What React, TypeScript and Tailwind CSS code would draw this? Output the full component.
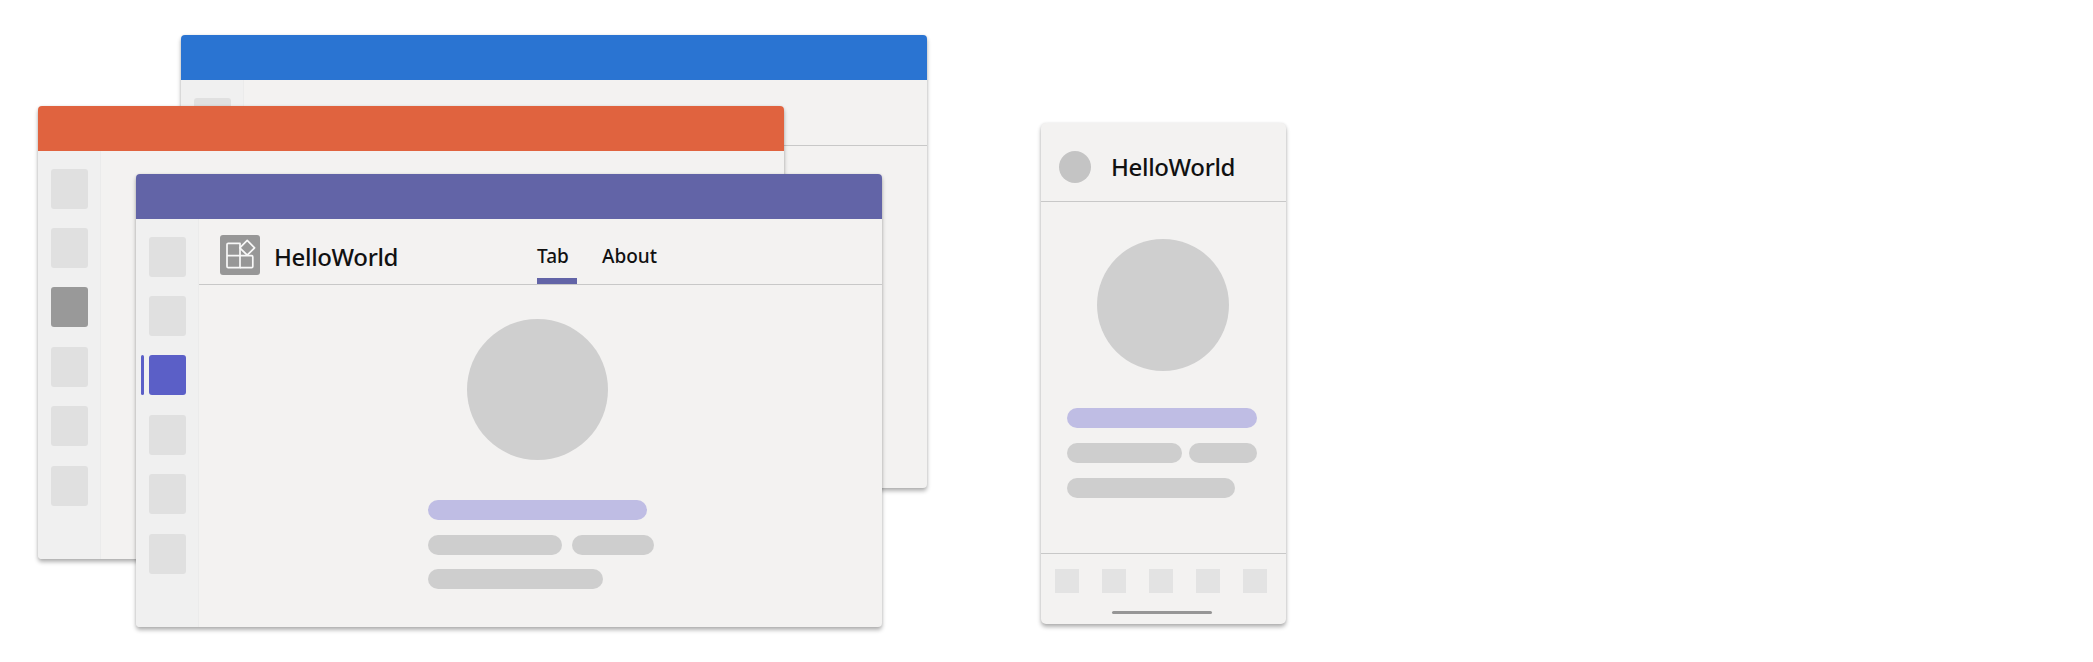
import React from "react";

const font = "font-['Noto_Sans','Open_Sans',sans-serif]";

function AppIcon() {
  return (
    <div className="w-10 h-10 rounded-[3px] bg-[#979797] shrink-0">
      <svg width="40" height="40" viewBox="0 0 40 40" fill="none" stroke="#f8f8f8" strokeWidth="1.7" strokeLinejoin="round">
        <path d="M8.2 8.3H20V32.7H8.2a1.2 1.2 0 0 1-1.2-1.2V9.5a1.2 1.2 0 0 1 1.2-1.2Z" />
        <path d="M7 20.7H31.6a1.2 1.2 0 0 1 1.2 1.2V31.5a1.2 1.2 0 0 1-1.2 1.2H20" />
        <path d="M27.2 5.4 34.6 12.8 27.2 20.2 19.8 12.8Z" />
      </svg>
    </div>
  );
}

function Sidebar({ active, dark }: { active?: number; dark?: number }) {
  return (
    <div className="w-[63px] shrink-0 bg-[#f0f0f0] border-r border-[#ebebeb] pt-[17.6px] pl-[13px] flex flex-col gap-[19.4px] rounded-bl-[4px]">
      {[0, 1, 2, 3, 4, 5].map((i) => (
        <div key={i} className="relative w-[37px] h-10">
          {i === active && <div className="absolute left-[-8px] top-0 w-[3px] h-10 rounded-full bg-[#5b5fc7]" />}
          <div
            className={
              "w-[37px] h-10 rounded-[3px] " +
              (i === active ? "bg-[#5b5fc7]" : i === dark ? "bg-[#999999]" : "bg-[#e0e0e0]")
            }
          />
        </div>
      ))}
    </div>
  );
}

function Pill({ className }: { className: string }) {
  return <div className={"h-5 rounded-full " + className} />;
}

function Desktop({
  position,
  header,
  active,
  dark,
  children,
}: {
  position: string;
  header: string;
  active?: number;
  dark?: number;
  children?: React.ReactNode;
}) {
  return (
    <div className={"absolute w-[746px] h-[453px] flex flex-col rounded-[4px] bg-[#f3f2f1] shadow-[0_3px_4px_rgba(0,0,0,0.3),0_0_3px_rgba(0,0,0,0.08)] " + position}>
      <div className={"h-[45px] shrink-0 rounded-t-[4px] " + header} />
      <div className="flex flex-1 min-h-0">
        <Sidebar active={active} dark={dark} />
        <div className="flex-1 min-w-0">{children}</div>
      </div>
    </div>
  );
}

export default function App() {
  return (
    <div className={"relative w-[2093px] h-[662px] bg-white overflow-hidden " + font}>
      <Desktop position="left-[181px] top-[35px]" header="bg-[#2a74d2]">
        <div className="h-[66px] border-b border-[#c8c8c8]" />
      </Desktop>

      <Desktop position="left-[38px] top-[106px]" header="bg-[#e0633f]" dark={2} />

      <Desktop position="left-[136px] top-[174px]" header="bg-[#6264a7]" active={2}>
        <div className="h-[66px] border-b border-[#c8c8c8] flex pl-[21px]">
          <div className="flex items-start pt-4 gap-[14px] w-[317px]">
            <AppIcon />
            <span className="mt-[2px] text-[24px] leading-[40px] font-medium text-[#111] tracking-[-0.35px]">HelloWorld</span>
          </div>
          <div className="flex gap-[25px] text-[19px] font-medium text-[#111]">
            <div className="w-10 flex flex-col justify-between pt-[23px]">
              <span className="leading-7">Tab</span>
              <div className="h-[6px] bg-[#6264a7]" />
            </div>
            <span className="leading-7 pt-[23px]">About</span>
          </div>
        </div>
        <div className="pl-[229px] pt-[34px]">
          <div className="ml-[39px] w-[141px] h-[141px] rounded-full bg-[#cfcfcf]" />
          <Pill className="mt-[40px] w-[219px] bg-[#bfbde4]" />
          <div className="mt-[15px] flex gap-[10px]">
            <Pill className="w-[134px] bg-[#cecece]" />
            <Pill className="w-[82px] bg-[#cecece]" />
          </div>
          <Pill className="mt-[14px] w-[175px] bg-[#cecece]" />
        </div>
      </Desktop>

      <div className="absolute left-[1041px] top-[123px] w-[245px] h-[501px] flex flex-col rounded-[5px] bg-[#f3f2f1] shadow-[0_3px_4px_rgba(0,0,0,0.3),0_0_3px_rgba(0,0,0,0.08)]">
        <div className="h-[79px] shrink-0 border-b border-[#c8c8c8] flex items-center pl-[18px] pt-[10px] gap-[20px]">
          <div className="w-8 h-8 rounded-full bg-[#c4c4c4]" />
          <span className="text-[24px] leading-8 font-medium text-[#111] tracking-[-0.35px]">HelloWorld</span>
        </div>
        <div className="flex-1 min-h-0 pl-[26px] pt-[37px]">
          <div className="ml-[30px] w-[132px] h-[132px] rounded-full bg-[#cfcfcf]" />
          <Pill className="mt-[37px] w-[190px] bg-[#bfbde4]" />
          <div className="mt-[15px] flex gap-[7px]">
            <Pill className="w-[115px] bg-[#cecece]" />
            <Pill className="w-[68px] bg-[#cecece]" />
          </div>
          <Pill className="mt-[15px] w-[168px] bg-[#cecece]" />
        </div>
        <div className="h-[71px] shrink-0 border-t border-[#c8c8c8] flex flex-col pl-[14px] pt-[15px]">
          <div className="flex gap-[23px]">
            {[0, 1, 2, 3, 4].map((i) => (
              <div key={i} className="w-6 h-6 bg-[#e3e3e3]" />
            ))}
          </div>
          <div className="mt-[18px] ml-[57px] w-[100px] h-[3px] rounded-full bg-[#969696]" />
        </div>
      </div>
    </div>
  );
}
